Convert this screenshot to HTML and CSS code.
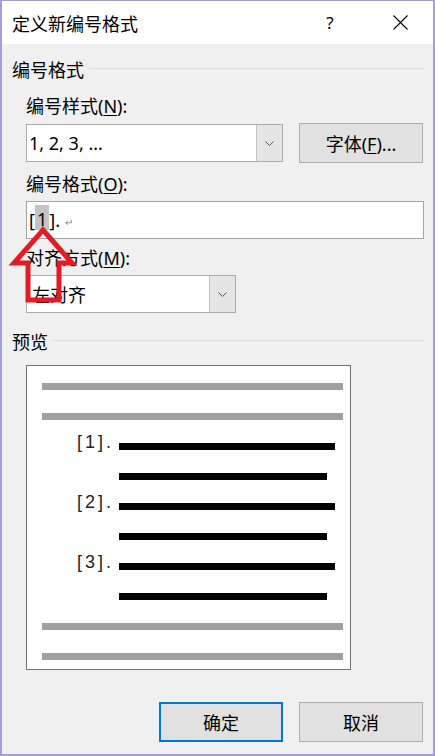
FILE: index.html
```html
<!DOCTYPE html>
<html lang="zh-CN">
<head>
  <meta charset="UTF-8" />
  <title>定义新编号格式</title>
  <link rel="stylesheet" href="styles.css">
</head>
<body>
  <div class="window">
    <!-- title bar -->
    <div class="titlebar">
      <span class="title">定义新编号格式</span>
      <span class="tb-btn help">?</span>
      <span class="tb-btn close">
        <svg width="15" height="15" viewBox="0 0 15 15"><path d="M0.5 0.5L14.5 14.5M14.5 0.5L0.5 14.5" stroke="#000" stroke-width="1.1" fill="none"/></svg>
      </span>
    </div>

    <div class="content">
      <div class="group-head"><span>编号格式</span><i class="rule"></i></div>

      <div class="field">
        <div class="label first">编号样式(<u>N</u>):</div>
        <div class="row">
          <div class="combo style-combo">
            <span class="combo-text">1, 2, 3, ...</span>
            <span class="drop"><svg width="9" height="5" viewBox="0 0 9 5"><path d="M0.5 0.5L4.5 4.5L8.5 0.5" stroke="#555" fill="none"/></svg></span>
          </div>
          <button class="btn font-btn">字体(<u>F</u>)...</button>
        </div>

        <div class="label">编号格式(<u>O</u>):</div>
        <div class="textbox">[<span class="sel">1</span>].<span class="ret">↵</span></div>

        <div class="label tight">对齐方式(<u>M</u>):</div>
        <div class="combo align-combo">
          <span class="combo-text">左对齐</span>
          <span class="drop"><svg width="9" height="5" viewBox="0 0 9 5"><path d="M0.5 0.5L4.5 4.5L8.5 0.5" stroke="#555" fill="none"/></svg></span>
        </div>
      </div>

      <div class="group-head preview-head"><span>预览</span><i class="rule"></i></div>

      <div class="field">
        <div class="preview">
          <div class="bar gray"></div>
          <div class="bar gray"></div>
          <div class="prow"><span class="num">[1].</span><div class="bar black long"></div></div>
          <div class="prow"><span class="num"></span><div class="bar black short"></div></div>
          <div class="prow"><span class="num">[2].</span><div class="bar black long"></div></div>
          <div class="prow"><span class="num"></span><div class="bar black short"></div></div>
          <div class="prow"><span class="num">[3].</span><div class="bar black long"></div></div>
          <div class="prow"><span class="num"></span><div class="bar black short"></div></div>
          <div class="bar gray"></div>
          <div class="bar gray"></div>
        </div>
      </div>

      <div class="actions">
        <button class="btn default">确定</button>
        <button class="btn">取消</button>
      </div>
    </div>

    <!-- red callout arrow pointing at the number field -->
    <svg class="arrow" width="70" height="82" viewBox="0 0 70 82">
      <polygon points="31,5 60,38 47,38 47,75 16,75 16,38 2,38" fill="none" stroke="#e31b23" stroke-width="5" stroke-linejoin="miter"/>
    </svg>
  </div>
</body>
</html>
```

FILE: styles.css
```css
* {
  box-sizing: border-box;
  margin: 0;
  padding: 0;
}

body {
  font-family: "Noto Sans", "Noto Sans CJK SC", sans-serif;
  background: #fff;
  color: #000;
}

.window {
  position: relative;
  width: 435px;
  height: 756px;
  border: 2px solid #a69cd6;
  border-top-width: 1px;
  background: #f0f0f0;
  display: flex;
  flex-direction: column;
}

.titlebar {
  height: 43px;
  background: #fff;
  display: flex;
  align-items: center;
  padding-left: 10px;
  font-size: 18px;
}

.title {
  flex: 1;
}

.tb-btn {
  height: 100%;
  display: flex;
  align-items: center;
  justify-content: center;
}

.help {
  width: 74px;
  font-size: 17px;
}

.close {
  width: 66px;
}

.content {
  flex: 1;
  display: flex;
  flex-direction: column;
  padding: 14px 9px 0 10px;
}

.group-head {
  display: flex;
  align-items: center;
  gap: 5px;
  font-size: 18px;
  line-height: 24px;
}

.group-head .rule {
  flex: 1;
  height: 1px;
  background: #dcdcdc;
  margin-bottom: 3px;
}

.preview-head {
  margin-top: 17px;
  gap: 4px;
}

.field {
  padding-left: 14px;
}

.label {
  font-size: 18px;
  line-height: 24px;
  margin-top: 9px;
}

.label.first {
  margin-top: 12px;
}

.label.tight {
  margin-top: 7px;
}

u {
  text-decoration-thickness: 1px;
  text-underline-offset: 2px;
}

.row {
  display: flex;
  align-items: center;
  gap: 16px;
  height: 40px;
  margin-top: 5px;
}

.combo {
  display: flex;
  align-items: stretch;
  height: 38px;
  background: #fff;
  border: 1px solid #acacac;
  font-size: 18px;
}

.style-combo {
  width: 257px;
}

.align-combo {
  width: 210px;
  margin-top: 5px;
}

.combo-text {
  flex: 1;
  display: flex;
  align-items: center;
  padding-left: 2px;
}

.align-combo .combo-text {
  padding-left: 5px;
}

.drop {
  width: 26px;
  background: #e5e5e5;
  border-left: 1px solid #c2c2c2;
  display: flex;
  align-items: center;
  justify-content: center;
}

.btn {
  width: 124px;
  height: 40px;
  background: #e1e1e1;
  border: 1px solid #adadad;
  font-family: inherit;
  font-size: 18px;
  color: #000;
}

.textbox {
  height: 38px;
  margin-top: 5px;
  background: #fff;
  border: 1px solid #a6a6a6;
  font-size: 18px;
  display: flex;
  align-items: center;
  padding-left: 2px;
}

.sel {
  background: #c4c4c4;
  padding: 0 2px;
  line-height: 22px;
  margin-top: -6px;
  padding-top: 3px;
}

.ret {
  font-size: 10px;
  color: #8a8a8a;
  margin-left: 5px;
  margin-top: 4px;
}

.preview {
  width: 325px;
  height: 305px;
  margin-top: 11px;
  background: #fff;
  border: 1px solid #737373;
  display: flex;
  flex-direction: column;
  gap: 23px;
  padding: 17px 7px 9px 15px;
}

.bar {
  height: 7px;
}

.bar.gray {
  background: #a0a0a0;
}

.bar.black {
  background: #000;
}

.bar.long {
  width: 216px;
}

.bar.short {
  width: 208px;
}

.prow {
  display: flex;
  align-items: center;
  height: 7px;
}

.num {
  width: 77px;
  text-align: right;
  padding-right: 5px;
  font-family: "Liberation Sans", sans-serif;
  font-size: 18px;
  letter-spacing: 3px;
  line-height: 7px;
  color: #222;
  margin-top: -8px;
}

.actions {
  display: flex;
  justify-content: flex-end;
  gap: 16px;
  margin-top: 32px;
  margin-right: 1px;
}

.btn.default {
  border: 2px solid #0078d7;
}

.arrow {
  position: absolute;
  left: 10px;
  top: 224px;
  overflow: visible;
}
```
